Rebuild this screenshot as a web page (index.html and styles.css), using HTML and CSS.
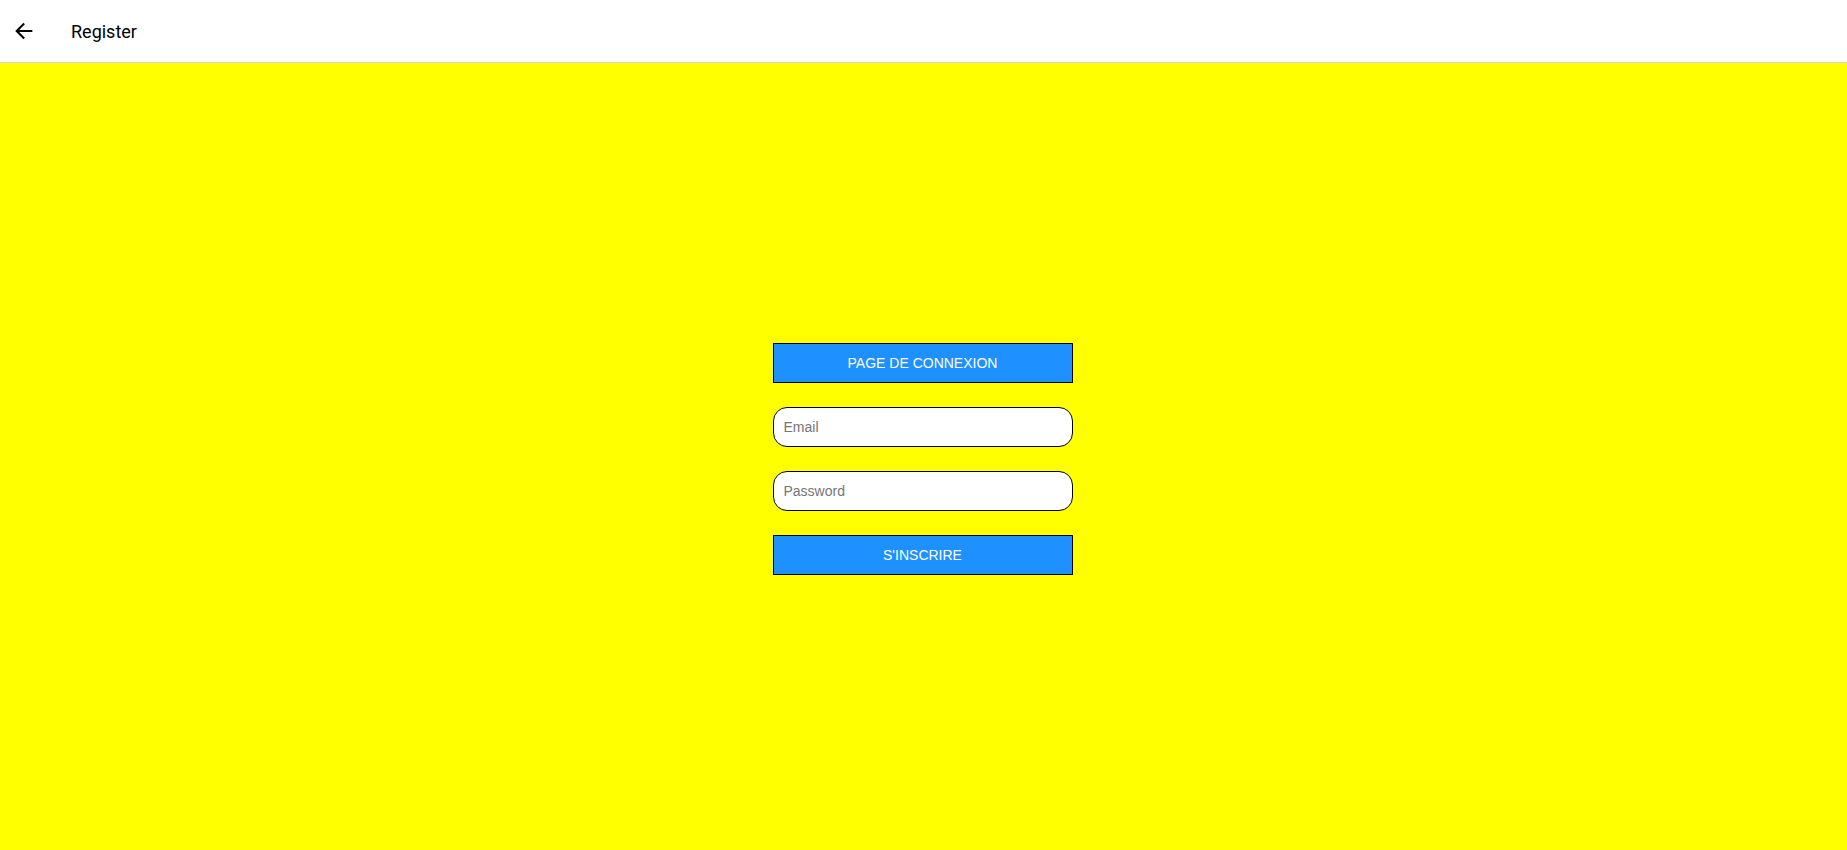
FILE: index.html
```html
<!DOCTYPE html>
<html lang="fr">
<head>
<meta charset="utf-8">
<title>Register</title>
<link rel="stylesheet" href="styles.css">
</head>
<body>
<header class="toolbar">
  <button class="back" aria-label="Back">
    <svg width="24" height="24" viewBox="0 0 512 512" aria-hidden="true">
      <path d="M244 400L100 256l144-144M120 256h292" fill="none" stroke="#000" stroke-linecap="square" stroke-width="44"/>
    </svg>
  </button>
  <h1 class="title">Register</h1>
</header>
<main class="content">
  <form class="form">
    <button type="button" class="btn">PAGE DE CONNEXION</button>
    <input class="field" type="email" placeholder="Email">
    <input class="field" type="password" placeholder="Password">
    <button type="button" class="btn">S'INSCRIRE</button>
  </form>
</main>
</body>
</html>
```

FILE: styles.css
```css
html, body {
  margin: 0;
  padding: 0;
  height: 100%;
}
body {
  font-family: Roboto, "Liberation Sans", Arial, sans-serif;
  background: #ffff00;
  display: flex;
  flex-direction: column;
}
.toolbar {
  height: 62px;
  background: #fff;
  border-bottom: 1px solid #d7d7d7;
  display: flex;
  align-items: center;
  flex-shrink: 0;
}
.back {
  border: 0;
  background: none;
  padding: 0;
  margin-left: 12px;
  width: 24px;
  height: 24px;
  display: flex;
  align-items: center;
  justify-content: center;
  cursor: pointer;
}
.title {
  margin: 0 0 0 35px;
  font-size: 18px;
  font-weight: 400;
  color: #000;
}
.content {
  flex: 1;
  display: flex;
  align-items: center;
  justify-content: center;
  padding-top: 5px;
  padding-right: 2px;
}
.form {
  width: 300px;
  display: flex;
  flex-direction: column;
  gap: 24px;
}
.btn {
  height: 40px;
  box-sizing: border-box;
  background: #1e90ff;
  border: 1px solid #000;
  color: #fff;
  font-family: "Liberation Sans", Arial, sans-serif;
  font-size: 14px;
  padding: 0;
  cursor: pointer;
}
.field {
  height: 40px;
  box-sizing: border-box;
  border: 1px solid #000;
  border-radius: 14px;
  background: #fff;
  padding: 0 10px;
  font-family: "Liberation Sans", Arial, sans-serif;
  font-size: 14px;
  outline: none;
}
.field::placeholder {
  color: #757575;
}
```
